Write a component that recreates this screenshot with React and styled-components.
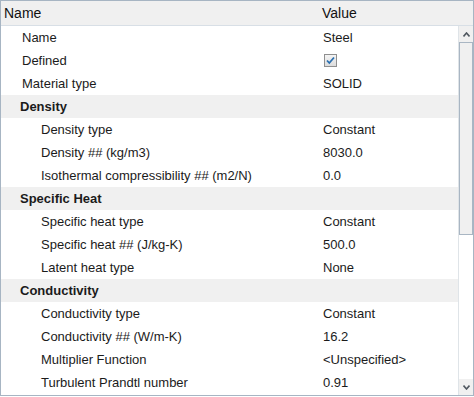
import React from 'react'
import styled, {createGlobalStyle} from 'styled-components'

const GlobalStyle = createGlobalStyle`
body {
  margin: 0;
  background: #ffffff;
  font-family: "Liberation Sans", Arial, sans-serif;
}
`;

const rows = [
  {label: 'Name', value: 'Steel', level: 0},
  {label: 'Defined', check: true, level: 0},
  {label: 'Material type', value: 'SOLID', level: 0},
  {label: 'Density', group: true},
  {label: 'Density type', value: 'Constant', level: 1},
  {label: 'Density ## (kg/m3)', value: '8030.0', level: 1},
  {label: 'Isothermal compressibility ## (m2/N)', value: '0.0', level: 1},
  {label: 'Specific Heat', group: true},
  {label: 'Specific heat type', value: 'Constant', level: 1},
  {label: 'Specific heat ## (J/kg-K)', value: '500.0', level: 1},
  {label: 'Latent heat type', value: 'None', level: 1},
  {label: 'Conductivity', group: true},
  {label: 'Conductivity type', value: 'Constant', level: 1},
  {label: 'Conductivity ## (W/m-K)', value: '16.2', level: 1},
  {label: 'Multiplier Function', value: '<Unspecified>', level: 1},
  {label: 'Turbulent Prandtl number', value: '0.91', level: 1},
]

function CheckBox(){
  return (
    <Check>
      <svg width="9" height="9" viewBox="0 0 9 9">
        <path d="M1 4.5 L3.3 7 L8 1.5" fill="none" stroke="#2a6fb0" strokeWidth="1.8" />
      </svg>
    </Check>
  )
}

function Arrow({down}){
  return (
    <svg width="7" height="5" viewBox="0 0 7 5" style={down ? {transform: 'rotate(180deg)'} : null}>
      <path d="M0.5 4.5 L3.5 1 L6.5 4.5" fill="none" stroke="#505860" strokeWidth="1.6" />
    </svg>
  )
}

function App(){
  return (
    <>
      <GlobalStyle />
      <Frame>
        <Header>
          <HeadName>Name</HeadName>
          <HeadValue>Value</HeadValue>
        </Header>
        <Body>
          <Rows>
            {rows.map((r, i) => (
              <Row key={i} $group={r.group}>
                <Label $level={r.group ? -1 : r.level} $group={r.group}>{r.label}</Label>
                <Value>{r.check ? <CheckBox /> : r.value}</Value>
              </Row>
            ))}
          </Rows>
          <ScrollBar>
            <ArrowButton><Arrow /></ArrowButton>
            <Track>
              <Thumb />
            </Track>
            <ArrowButton><Arrow down /></ArrowButton>
          </ScrollBar>
        </Body>
      </Frame>
    </>
  )
}

const Frame = styled.div`
width: 474px;
height: 396px;
box-sizing: border-box;
border: 1px solid #a7b5c3;
display: flex;
flex-direction: column;
overflow: hidden;
color: #1b1b1b;
font-size: 13px;
`;
const Header = styled.div`
height: 24px;
flex: none;
background: #f0f0f0;
border-bottom: 1px solid #d8dfe6;
display: flex;
align-items: center;
font-size: 14px;
color: #111;
`;
const HeadName = styled.div`
width: 318px;
padding-left: 3px;
`;
const HeadValue = styled.div``;
const Body = styled.div`
flex: 1;
display: flex;
min-height: 0;
`;
const Rows = styled.div`
flex: 1;
display: flex;
flex-direction: column;
`;
const Row = styled.div`
height: 23px;
flex: none;
display: flex;
align-items: center;
background: ${p => p.$group ? '#f0f0f0' : '#ffffff'};
`;
const Label = styled.div`
width: ${p => p.$level === 1 ? 282 : p.$level === 0 ? 301 : 303}px;
padding-left: ${p => p.$level === 1 ? 40 : p.$level === 0 ? 21 : 19}px;
font-weight: ${p => p.$group ? 700 : 400};
white-space: nowrap;
`;
const Value = styled.div`
display: flex;
align-items: center;
`;
const Check = styled.div`
width: 11px;
height: 11px;
border: 1px solid #8f8f8f;
background: linear-gradient(#f4f4f4, #dcdcdc);
display: flex;
align-items: center;
justify-content: center;
margin-left: 1px;
`;
const ScrollBar = styled.div`
width: 14px;
flex: none;
display: flex;
flex-direction: column;
background: #ffffff;
border-left: 1px solid #dfe4e8;
`;
const ArrowButton = styled.div`
height: 16px;
flex: none;
background: #f0f0f0;
display: flex;
align-items: center;
justify-content: center;
`;
const Track = styled.div`
flex: 1;
background: #ffffff;
`;
const Thumb = styled.div`
height: 193px;
box-sizing: border-box;
border: 1px solid #a9b6c3;
background: #f0f0f0;
`;

export default App
